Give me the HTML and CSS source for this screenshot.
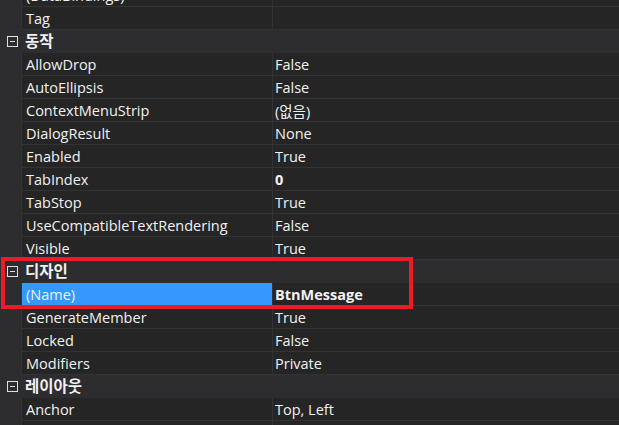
FILE: index.html
```html
<!DOCTYPE html>
<html lang="ko">
<head>
<meta charset="utf-8">
<link rel="stylesheet" href="styles.css">
</head>
<body>
<div class="grid">
  <div class="row prop"><span class="gut"></span><span class="name">(DataBindings)</span><span class="val"></span></div>
  <div class="row prop"><span class="gut"></span><span class="name">Tag</span><span class="val"></span></div>
  <div class="row cat"><span class="gut"><i class="box"></i></span><span class="cname">동작</span></div>
  <div class="row prop"><span class="gut"></span><span class="name">AllowDrop</span><span class="val">False</span></div>
  <div class="row prop"><span class="gut"></span><span class="name">AutoEllipsis</span><span class="val">False</span></div>
  <div class="row prop"><span class="gut"></span><span class="name">ContextMenuStrip</span><span class="val">(없음)</span></div>
  <div class="row prop"><span class="gut"></span><span class="name">DialogResult</span><span class="val">None</span></div>
  <div class="row prop"><span class="gut"></span><span class="name">Enabled</span><span class="val">True</span></div>
  <div class="row prop"><span class="gut"></span><span class="name">TabIndex</span><span class="val bold">0</span></div>
  <div class="row prop"><span class="gut"></span><span class="name">TabStop</span><span class="val">True</span></div>
  <div class="row prop"><span class="gut"></span><span class="name">UseCompatibleTextRendering</span><span class="val">False</span></div>
  <div class="row prop"><span class="gut"></span><span class="name">Visible</span><span class="val">True</span></div>
  <div class="row cat"><span class="gut"><i class="box"></i></span><span class="cname">디자인</span></div>
  <div class="row prop sel"><span class="gut"></span><span class="name">(Name)</span><span class="val bold">BtnMessage</span></div>
  <div class="row prop"><span class="gut"></span><span class="name">GenerateMember</span><span class="val">True</span></div>
  <div class="row prop"><span class="gut"></span><span class="name">Locked</span><span class="val">False</span></div>
  <div class="row prop"><span class="gut"></span><span class="name">Modifiers</span><span class="val">Private</span></div>
  <div class="row cat"><span class="gut"><i class="box"></i></span><span class="cname">레이아웃</span></div>
  <div class="row prop"><span class="gut"></span><span class="name">Anchor</span><span class="val">Top, Left</span></div>
  <div class="row prop"><span class="gut"></span><span class="name">AutoSize</span><span class="val">False</span></div>
</div>
<div class="mark"></div>
</body>
</html>
```
FILE: styles.css
```css
html, body {
  margin: 0;
  padding: 0;
  background: #2d2d30;
  overflow: hidden;
  height: 425px;
}
body {
  position: relative;
  font-family: "Open Sans", "Noto Sans CJK KR", sans-serif;
  font-size: 14.5px;
  color: #f1f1f1;
}
.grid {
  display: flex;
  flex-direction: column;
  margin-top: -16px;
}
.row {
  display: grid;
  grid-template-columns: 21px 250px 1fr;
  height: 23px;
  box-sizing: border-box;
}
.prop {
  column-gap: 1px;
  padding-bottom: 1px;
  background: #333337;
}
.prop .gut {
  background: #2d2d30;
  margin-bottom: -1px;
}
.name, .val {
  background: #252526;
  display: flex;
  align-items: center;
  white-space: nowrap;
  overflow: hidden;
}
.name { padding-left: 4px; }
.val { padding-left: 2px; }
.bold { font-weight: 700; }
.sel .name { background: #3399ff; }
.cat {
  background: #2d2d30;
  grid-template-columns: 21px 1fr;
  align-items: center;
}
.cat .gut {
  display: flex;
  justify-content: center;
  align-items: center;
  padding-left: 3px;
}
.box {
  display: block;
  width: 9px;
  height: 9px;
  border: 1px solid #e0e0e0;
  position: relative;
}
.box::after {
  content: "";
  position: absolute;
  left: 2px;
  right: 2px;
  top: 4px;
  height: 1px;
  background: #e0e0e0;
}
.cname {
  font-weight: 700;
  font-size: 15.5px;
  padding-left: 4px;
  line-height: 1;
}
.mark {
  position: absolute;
  left: 1px;
  top: 257px;
  width: 412px;
  height: 52px;
  box-sizing: border-box;
  border: 4px solid #ed1c24;
}
```
